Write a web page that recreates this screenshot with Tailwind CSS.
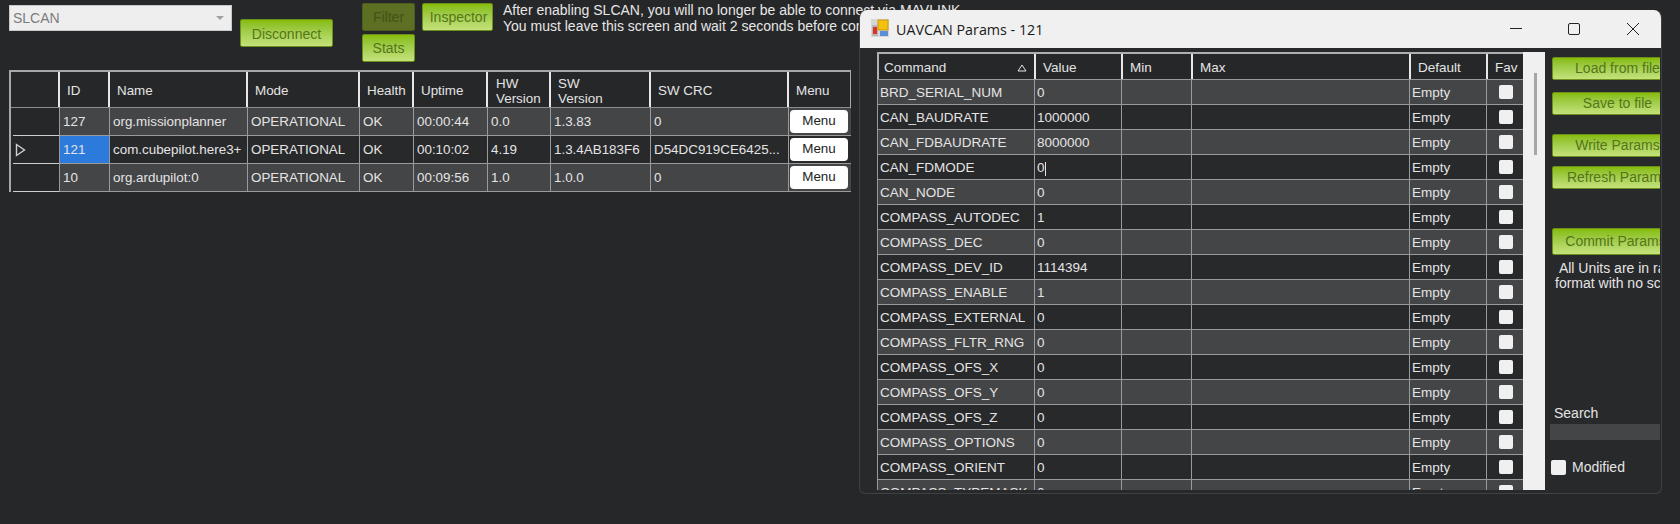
<!DOCTYPE html>
<html lang="en">
<head>
  <meta charset="UTF-8">
  <title>UAVCAN</title>
  <script src="https://cdn.jsdelivr.net/npm/@tailwindcss/browser@4"></script>
</head>
<body class="bg-[#262729] font-['Liberation_Sans',sans-serif] text-[13.4px] text-[#e4e4e4] overflow-hidden">
  <div class="relative w-[1680px] h-[524px] overflow-hidden">

    <!-- top controls -->
    <div class="flex h-[70px] pl-[9px]">
      <div class="w-[223px] h-[26px] mt-[5px] bg-[#eeeeee] border border-[#c8c8c8] flex items-center justify-between pl-[3px] pr-[7px] text-[#7c7c7c] text-[14px]">
        <span>SLCAN</span>
        <span class="w-0 h-0 border-x-[4px] border-x-transparent border-t-[4px] border-t-[#a0a0a0]"></span>
      </div>
      <button class="w-[93px] h-[28px] mt-[19px] ml-[8px] pt-[2px] rounded-[2px] border border-[#6d8f1e] bg-gradient-to-b from-[#86bc00] to-[#c4e27a] text-[#55751a] text-[14px]">Disconnect</button>
      <div class="flex flex-col gap-[3px] ml-[29px] mt-[3px]">
        <button class="w-[53px] h-[28px] rounded-[2px] border border-[#4d5d20] bg-[#5c6f22] text-[#41531a] text-[14px]">Filter</button>
        <button class="w-[53px] h-[28px] rounded-[2px] border border-[#6d8f1e] bg-gradient-to-b from-[#86bc00] to-[#c4e27a] text-[#55751a] text-[14px]">Stats</button>
      </div>
      <button class="w-[71px] h-[28px] mt-[3px] ml-[7px] pl-[2px] rounded-[2px] border border-[#6d8f1e] bg-gradient-to-b from-[#86bc00] to-[#c4e27a] text-[#55751a] text-[14px]">Inspector</button>
      <div class="ml-[10px] mt-[2px] text-[14px] leading-[16px] text-[#e6e6e6] whitespace-nowrap">
        <p>After enabling SLCAN, you will no longer be able to connect via MAVLINK.</p>
        <p>You must leave this screen and wait 2 seconds before connecting</p>
      </div>
    </div>

    <!-- nodes table -->
    <div class="ml-[9px] w-[842px] border-2 border-[#a8a8a8] border-b-0 border-r-[1px]">
      <div class="grid grid-cols-[49px_50px_138px_112px_54px_74px_63px_100px_138px_62px] h-[36px] bg-[#262729] border-b border-[#8c8c8c] leading-[15px]">
        <div class="border-r-2 border-[#e8e8e8]"></div>
        <div class="border-r-2 border-[#e8e8e8] flex items-center pl-[7px] pt-[2px]">ID</div>
        <div class="border-r-2 border-[#e8e8e8] flex items-center pl-[7px] pt-[2px]">Name</div>
        <div class="border-r-2 border-[#e8e8e8] flex items-center pl-[7px] pt-[2px]">Mode</div>
        <div class="border-r-2 border-[#e8e8e8] flex items-center pl-[7px] pt-[2px]">Health</div>
        <div class="border-r-2 border-[#e8e8e8] flex items-center pl-[7px] pt-[2px]">Uptime</div>
        <div class="border-r-2 border-[#e8e8e8] flex items-center pl-[8px] pt-[2px]">HW<br>Version</div>
        <div class="border-r-2 border-[#e8e8e8] flex items-center pl-[7px] pt-[2px]">SW<br>Version</div>
        <div class="border-r-2 border-[#e8e8e8] flex items-center pl-[7px] pt-[2px]">SW CRC</div>
        <div class="flex items-center pl-[7px] pt-[2px]">Menu</div>
      </div>
      <div id="nodes"></div>
    </div>

    <!-- params window -->
    <div class="absolute left-[859px] top-[10px] w-[803px] h-[484px] rounded-t-lg rounded-b-md bg-[#28292b] border-b border-r border-l border-[#3f4042] overflow-hidden">
      <div class="h-[38px] bg-[#f0f0f0] flex items-center text-[#1a1a1a] relative">
        <svg class="ml-[11px] -mt-[2px]" width="18" height="18" viewBox="0 0 18 18">
          <rect x="0" y="0" width="18" height="18" fill="#d6d6d6"/>
          <rect x="1" y="6" width="6" height="11" fill="#b8b8b8"/>
          <rect x="2" y="8" width="4" height="7" fill="#d8342c"/>
          <rect x="7" y="1" width="10" height="10" fill="#f4c20d" stroke="#c79a10" stroke-width="1"/>
          <rect x="9" y="12" width="8" height="5" fill="#5a8fd8"/>
        </svg>
        <span class="ml-[7px] pt-[2px] font-['Open_Sans',sans-serif] text-[14.3px]">UAVCAN Params - 121</span>
        <svg class="absolute left-[649px] top-[13px]" width="14" height="14" viewBox="0 0 14 14"><path d="M1 5.5h12" stroke="#222" fill="none"/></svg>
        <svg class="absolute left-[707px] top-[13px]" width="14" height="14" viewBox="0 0 14 14"><rect x="1.5" y="0.5" width="11" height="11" rx="1.5" stroke="#222" fill="none"/></svg>
        <svg class="absolute left-[766px] top-[13px]" width="14" height="14" viewBox="0 0 14 14"><path d="M1 0l12 12M13 0L1 12" stroke="#222" fill="none"/></svg>
      </div>
      <div class="flex h-[442px] pl-[17px] pt-[4px]">
        <div class="w-[646px] h-[438px] overflow-hidden">
          <div class="grid grid-cols-[157px_87px_70px_218px_77px_37px] h-[27px] bg-[#262729] border-t-2 border-l-2 border-[#b0b0b0] border-b-0 leading-[15px] text-[13.5px]">
            <div class="border-r-2 border-[#e8e8e8] flex items-center justify-between pl-[5px] pr-[7px] pt-[2px]">Command
              <svg width="10" height="8" viewBox="0 0 10 8"><path d="M5 1L9 7H1Z" fill="none" stroke="#e4e4e4"/></svg>
            </div>
            <div class="border-r-2 border-[#e8e8e8] flex items-center pl-[7px] pt-[2px]">Value</div>
            <div class="border-r-2 border-[#e8e8e8] flex items-center pl-[7px] pt-[2px]">Min</div>
            <div class="border-r-2 border-[#e8e8e8] flex items-center pl-[7px] pt-[2px]">Max</div>
            <div class="border-r-2 border-[#e8e8e8] flex items-center pl-[7px] pt-[2px]">Default</div>
            <div class="flex items-center pl-[7px] pt-[2px]">Fav</div>
          </div>
          <div id="params" class="text-[13.5px]"></div>
        </div>
        <div class="relative w-[22px] h-[438px] bg-[#f0f0f0]">
          <div class="absolute left-[11px] top-[21px] w-[3px] h-[82px] bg-[#a6a6a6]"></div>
        </div>
        <div class="w-[115px] h-[438px] overflow-hidden pl-[7px]">
          <button class="block w-[131px] h-[23px] mt-[5px] rounded-[2px] border border-[#6d8f1e] bg-gradient-to-b from-[#86bc00] to-[#c4e27a] text-[#55751a] text-[14px]">Load from file</button>
          <button class="block w-[131px] h-[23px] mt-[12px] rounded-[2px] border border-[#6d8f1e] bg-gradient-to-b from-[#86bc00] to-[#c4e27a] text-[#55751a] text-[14px]">Save to file</button>
          <button class="block w-[131px] h-[23px] mt-[19px] rounded-[2px] border border-[#6d8f1e] bg-gradient-to-b from-[#86bc00] to-[#c4e27a] text-[#55751a] text-[14px]">Write Params</button>
          <button class="block w-[131px] h-[23px] mt-[9px] rounded-[2px] border border-[#6d8f1e] bg-gradient-to-b from-[#86bc00] to-[#c4e27a] text-[#55751a] text-[14px] whitespace-nowrap">Refresh Params</button>
          <button class="block w-[127px] h-[27px] mt-[39px] rounded-[2px] border border-[#6d8f1e] bg-gradient-to-b from-[#86bc00] to-[#c4e27a] text-[#55751a] text-[14px] whitespace-nowrap">Commit Params</button>
          <p class="mt-[6px] ml-[3px] leading-[15px] text-[14px] whitespace-nowrap">&nbsp;All Units are in raw</p>
          <p class="ml-[3px] leading-[15px] text-[14px] whitespace-nowrap">format with no scaling</p>
          <p class="mt-[114px] ml-[2px] leading-[16px] text-[14px]">Search</p>
          <div class="w-[120px] h-[16px] mt-[3px] -ml-[2px] bg-[#444547]"></div>
          <label class="flex items-center mt-[17px] -ml-[1px] text-[14px]">
            <span class="w-[15px] h-[15px] rounded-[2px] bg-[#f0f0f0]"></span>
            <span class="ml-[6px]">Modified</span>
          </label>
        </div>
      </div>
    </div>
  </div>

  <script>
    const nodes = [
      ['127', 'org.missionplanner', 'OPERATIONAL', 'OK', '00:00:44', '0.0', '1.3.83', '0'],
      ['121', 'com.cubepilot.here3+', 'OPERATIONAL', 'OK', '00:10:02', '4.19', '1.3.4AB183F6', 'D54DC919CE6425...'],
      ['10', 'org.ardupilot:0', 'OPERATIONAL', 'OK', '00:09:56', '1.0', '1.0.0', '0'],
    ];
    const params = [
      ['BRD_SERIAL_NUM', '0'], ['CAN_BAUDRATE', '1000000'], ['CAN_FDBAUDRATE', '8000000'],
      ['CAN_FDMODE', '0'], ['CAN_NODE', '0'], ['COMPASS_AUTODEC', '1'], ['COMPASS_DEC', '0'],
      ['COMPASS_DEV_ID', '1114394'], ['COMPASS_ENABLE', '1'], ['COMPASS_EXTERNAL', '0'],
      ['COMPASS_FLTR_RNG', '0'], ['COMPASS_OFS_X', '0'], ['COMPASS_OFS_Y', '0'],
      ['COMPASS_OFS_Z', '0'], ['COMPASS_OPTIONS', '0'], ['COMPASS_ORIENT', '0'], ['COMPASS_TYPEMASK', '0'],
    ];

    document.getElementById('nodes').innerHTML = nodes.map((n, i) => {
      const bg = i % 2 === 0 ? 'bg-[#444547]' : 'bg-[#28292b]';
      const cell = 'border-r border-b border-[#9a9a9a] flex items-center pl-[3px] pt-[2px] whitespace-nowrap overflow-hidden';
      return `<div class="grid grid-cols-[49px_50px_138px_112px_54px_74px_63px_100px_138px_62px] h-[28px]">
        <div class="border-r border-[#9a9a9a] bg-[#262729] pl-[2px] flex flex-col">
          <div class="flex-1 flex items-center pl-[2px]">${i === 1
            ? '<svg width="11" height="14" viewBox="0 0 11 14"><path d="M1.5 1.5L9.5 7L1.5 12.5Z" fill="none" stroke="#cfcfcf" stroke-width="1.4"/></svg>' : ''}</div>
          <div class="h-px bg-[#cfcfcf]"></div>
        </div>
        ${n.slice(0, 7).map((t, c) => `<div class="${cell} ${i === 1 && c === 0 ? 'bg-[#2c7bdc]' : bg}">${t}</div>`).join('')}
        <div class="${cell} ${bg}">${n[7]}</div>
        <div class="border-b border-[#9a9a9a] ${bg} flex items-center pl-[1px]"><button class="w-[58px] h-[23px] rounded-[4px] bg-white text-[#222]">Menu</button></div>
      </div>`;
    }).join('');

    document.getElementById('params').innerHTML = params.map((p, i) => {
      const bg = i % 2 === 0 ? 'bg-[#444547]' : 'bg-[#28292b]';
      const cell = `border-r border-t border-[#9a9a9a] ${bg} flex items-center pl-[2px] whitespace-nowrap`;
      return `<div class="grid grid-cols-[157px_87px_70px_218px_77px_37px] h-[25px] border-l border-[#9a9a9a]">
        <div class="${cell} pt-[3px]">${p[0]}</div>
        <div class="${cell} pt-[3px]">${p[1]}${i === 3 ? '<span class="w-px h-[14px] bg-[#e4e4e4]"></span>' : ''}</div>
        <div class="${cell}"></div>
        <div class="${cell}"></div>
        <div class="${cell} pt-[3px]">Empty</div>
        <div class="${cell} justify-center"><span class="w-[14px] h-[14px] rounded-[2px] bg-[#f0f0f0]"></span></div>
      </div>`;
    }).join('');
  </script>
</body>
</html>
